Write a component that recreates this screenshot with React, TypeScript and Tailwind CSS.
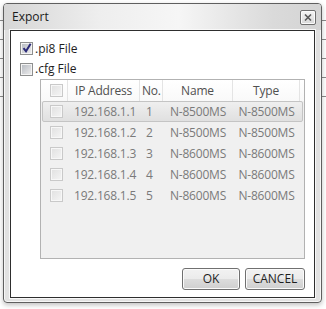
const devices = [
  { ip: "192.168.1.1", no: "1", name: "N-8500MS", type: "N-8500MS" },
  { ip: "192.168.1.2", no: "2", name: "N-8500MS", type: "N-8500MS" },
  { ip: "192.168.1.3", no: "3", name: "N-8600MS", type: "N-8600MS" },
  { ip: "192.168.1.4", no: "4", name: "N-8600MS", type: "N-8600MS" },
  { ip: "192.168.1.5", no: "5", name: "N-8600MS", type: "N-8600MS" },
];

function CheckBox({ checked = false, dim = false }: { checked?: boolean; dim?: boolean }) {
  return (
    <span
      className={`relative flex h-[13px] w-[13px] shrink-0 p-[1px] ${
        dim ? "border border-[#c9c9c9] bg-[#f7f7f7]" : "border border-[#8e8f8f] bg-[#f4f4f4]"
      }`}
    >
      <span
        className={`flex-1 ${
          dim
            ? "bg-[linear-gradient(135deg,#e2e2e2,#f3f3f3)]"
            : "bg-[linear-gradient(135deg,#b9bdc3,#ebebec)]"
        }`}
      />
      {checked && (
        <svg className="absolute -left-[1px] -top-[2px]" width="14" height="14" viewBox="0 0 14 14">
          <path d="M3.5 7.2 L6 10.2 L10.6 2.8" fill="none" stroke="#2b2a78" strokeWidth="2" />
        </svg>
      )}
    </span>
  );
}

function Button({ label, width }: { label: string; width: string }) {
  return (
    <button
      className={`${width} flex h-[22px] items-center justify-center rounded-[3px] border border-[#707070] bg-[linear-gradient(to_bottom,#f2f2f2_0%,#ebebeb_50%,#dddddd_50%,#cfcfcf_100%)] text-[12px] text-[#1e1e1e] shadow-[inset_0_0_0_1px_#fbfbfb]`}
    >
      {label}
    </button>
  );
}

export default function App() {
  return (
    <div className="relative h-[309px] w-[326px] overflow-hidden bg-white font-['Open_Sans',sans-serif]">
      {/* grid lines of the window behind */}
      <div className="flex flex-col">
        <div className="h-[21px] border-b border-[#8a8a8a]" />
        <div className="h-[19px] border-b border-[#8a8a8a]" />
        <div className="h-[19px] border-b border-[#8a8a8a]" />
        <div className="h-[19px] border-b border-[#8a8a8a]" />
        <div className="h-[19px] border-b border-[#8a8a8a]" />
      </div>

      <div className="absolute left-[3px] top-[3px] flex h-[300px] w-[319px] flex-col rounded-[4px] border border-[#5f5f5f] bg-[linear-gradient(to_bottom,#e4e4e4,#dedede_40px,#e2e2e2)] shadow-[inset_0_0_0_1px_#f6f6f6,0_2px_5px_rgba(0,0,0,0.25)]">
        <div className="flex h-[26px] items-center justify-between rounded-t-[3px] bg-[linear-gradient(to_right,#d6d6d6,#eeeeee_30%,#f6f6f6_55%,#dadada_85%,#d4d4d4)] pl-[8px] pr-[5px]">
          <span className="text-[12px] text-[#1a1a1a]">Export</span>
          <span className="flex h-[15px] w-[16px] items-center justify-center rounded-[2px] border border-[#6f6f6f] bg-[linear-gradient(to_bottom,#f4f4f4,#d9d9d9)] shadow-[inset_0_0_0_1px_#fafafa]">
            <svg width="8" height="7" viewBox="0 0 8 7">
              <path d="M1 0.5 L7 6.5 M7 0.5 L1 6.5" stroke="#5a5a5a" strokeWidth="1.6" />
            </svg>
          </span>
        </div>

        <div className="mx-[6px] mb-[4px] flex flex-1 flex-col border border-[#2e2e2e] bg-white pl-[9px] pr-[9px] pt-[7px] shadow-[0_0_0_1px_#f8f8f8]">
          <div className="flex h-[21px] items-center gap-[2px] text-[12px] text-[#1e1e1e]">
            <CheckBox checked />
            <span>.pi8 File</span>
          </div>
          <div className="flex h-[20px] items-center gap-[2px] text-[12px] text-[#1e1e1e]">
            <CheckBox />
            <span>.cfg File</span>
          </div>

          <div className="ml-[20px] flex h-[180px] flex-col border border-[#b2b2b2] bg-[#f0f0f0] text-[12px] tracking-[-0.2px]">
            <div className="flex h-[21px] bg-[linear-gradient(to_bottom,#ffffff,#f9f9f9)] text-[#505050]">
              <div className="flex w-[27px] items-center border-r border-[#e4e4e4] pl-[9px]">
                <CheckBox dim />
              </div>
              <div className="flex w-[72px] items-center border-r border-[#e4e4e4] pl-[7px]">IP Address</div>
              <div className="flex w-[23px] items-center border-r border-[#e4e4e4] pl-[2px]">No.</div>
              <div className="flex w-[70px] items-center justify-center border-r border-[#e4e4e4]">Name</div>
              <div className="flex w-[67px] items-center justify-center border-r border-[#e4e4e4]">Type</div>
            </div>
            {devices.map((d, i) => (
              <div
                key={d.ip}
                className={`mx-[1px] flex h-[21px] rounded-[2px] border text-[#7a7a7a] ${
                  i === 0
                    ? "border-[#c4c4c4] bg-[linear-gradient(to_bottom,#efefef,#e0e0e0)]"
                    : "border-transparent"
                }`}
              >
                <div className="flex w-[25px] items-center pl-[7px]">
                  <CheckBox dim />
                </div>
                <div className="flex w-[72px] items-center pl-[6px]">{d.ip}</div>
                <div className="flex w-[23px] items-center pl-[6px]">{d.no}</div>
                <div className="flex w-[70px] items-center justify-center">{d.name}</div>
                <div className="flex w-[67px] items-center justify-center">{d.type}</div>
              </div>
            ))}
          </div>

          <div className="mt-[9px] flex justify-end gap-[5px]">
            <Button label="OK" width="w-[58px]" />
            <Button label="CANCEL" width="w-[60px]" />
          </div>
        </div>
      </div>
    </div>
  );
}
